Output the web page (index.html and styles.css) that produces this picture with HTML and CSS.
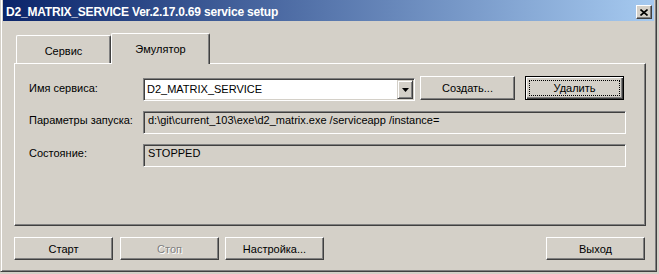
FILE: index.html
```html
<!DOCTYPE html>
<html>
<head>
    <title>D2_MATRIX_SERVICE setup</title>
    <link rel="stylesheet" href="styles.css">
</head>
<body>
    <div class="window">
        <div class="titlebar">
            <span class="title">D2_MATRIX_SERVICE Ver.2.17.0.69 service setup</span>
            <button class="close">
                <svg width="8" height="7" viewBox="0 0 8 7">
                    <path d="M0.5 0.5 L7.5 6.5 M7.5 0.5 L0.5 6.5" stroke="#000" stroke-width="1.6" fill="none"/>
                </svg>
            </button>
        </div>
        <div class="content">
            <div class="tabs">
                <div class="tab">Сервис</div>
                <div class="tab active">Эмулятор</div>
            </div>
            <div class="panel">
                <div class="row row-first">
                    <label class="label">Имя сервиса:</label>
                    <div class="combo">
                        <span class="combo-text">D2_MATRIX_SERVICE</span>
                        <span class="combo-btn">
                            <svg width="7" height="4" viewBox="0 0 7 4"><polygon points="0,0 7,0 3.5,4" fill="#000"/></svg>
                        </span>
                    </div>
                    <button class="btn create">Создать...</button>
                    <button class="btn default"><span class="focus">Удалить</span></button>
                </div>
                <div class="row">
                    <label class="label">Параметры запуска:</label>
                    <div class="field">d:\git\current_103\exe\d2_matrix.exe /serviceapp /instance=</div>
                </div>
                <div class="row row-last">
                    <label class="label">Состояние:</label>
                    <div class="field">STOPPED</div>
                </div>
            </div>
            <div class="actions">
                <button class="btn">Старт</button>
                <button class="btn stop" disabled>Стоп</button>
                <button class="btn setup">Настройка...</button>
                <button class="btn exit">Выход</button>
            </div>
        </div>
    </div>
</body>
</html>
```

FILE: styles.css
```css
body {
    margin: 0;
    background-color: #d4d0c8;
    font-family: "Liberation Sans", Arial, sans-serif;
    font-size: 11px;
    color: #000;
}

.window {
    width: 657px;
    height: 272px;
    box-sizing: border-box;
    padding: 0 2px;
    border-left: 1px solid #d4d0c8;
    border-right: 1px solid #404040;
    border-bottom: 1px solid #404040;
    box-shadow: inset 1px 0 #fff, inset -1px -1px #808080;
}

.titlebar {
    height: 21px;
    box-sizing: border-box;
    padding: 3px 2px 0 3px;
    display: flex;
    align-items: center;
    justify-content: space-between;
    background: linear-gradient(to right, #0a246a, #a6caf0);
    color: #fff;
}

.title {
    font-weight: bold;
    font-size: 12px;
    letter-spacing: -0.2px;
    white-space: nowrap;
}

.close {
    width: 16px;
    height: 14px;
    padding: 0;
    display: flex;
    align-items: center;
    justify-content: center;
    background-color: #d4d0c8;
    border: 1px solid;
    border-color: #fff #404040 #404040 #fff;
    box-shadow: inset -1px -1px #808080;
}

.content {
    padding-left: 11px;
}

/* tabs */
.tabs {
    margin-top: 12px;
    height: 30px;
    padding-left: 2px;
    display: flex;
    align-items: flex-end;
}

.tab {
    width: 95px;
    height: 28px;
    box-sizing: border-box;
    padding-top: 9px;
    line-height: 13px;
    text-align: center;
    border-top: 1px solid #fff;
    border-left: 1px solid #fff;
    border-right: 1px solid #404040;
    border-top-left-radius: 2px;
    border-top-right-radius: 2px;
    box-shadow: inset -1px 0 #808080;
}

.tab.active {
    width: 99px;
    height: 31px;
    margin-bottom: -1px;
    position: relative;
    z-index: 1;
    background-color: #d4d0c8;
}

.panel {
    width: 632px;
    height: 163px;
    box-sizing: border-box;
    padding: 12px 0 0 14px;
    border: 1px solid;
    border-color: #fff #404040 #404040 #fff;
    box-shadow: inset -1px -1px #808080;
}

.row {
    display: flex;
    align-items: flex-start;
    margin-bottom: 10px;
}

.row-first {
    margin-bottom: 10px;
}

.label {
    width: 114px;
    flex-shrink: 0;
    padding-top: 3px;
    line-height: 13px;
}

.row-first .label {
    padding-top: 6px;
}

/* sunken controls */
.field,
.combo {
    height: 23px;
    box-sizing: border-box;
    border: 1px solid;
    border-color: #808080 #fff #fff #808080;
    box-shadow: inset 1px 1px #404040, inset -1px -1px #d4d0c8;
}

.field {
    width: 483px;
    padding: 2px 4px 0;
    line-height: 13px;
    white-space: nowrap;
}

.combo {
    width: 272px;
    margin-top: 2px;
    padding: 1px 1px 1px 3px;
    display: flex;
    align-items: center;
    background-color: #fff;
}

.combo-text {
    flex: 1;
    line-height: 13px;
}

.combo-btn {
    width: 16px;
    height: 19px;
    box-sizing: border-box;
    display: flex;
    align-items: center;
    justify-content: center;
    background-color: #d4d0c8;
    border: 1px solid;
    border-color: #d4d0c8 #404040 #404040 #d4d0c8;
    box-shadow: inset 1px 1px #fff, inset -1px -1px #808080;
}

/* buttons */
.btn {
    width: 99px;
    height: 23px;
    padding: 0;
    font-family: inherit;
    font-size: 11px;
    color: #000;
    background-color: #d4d0c8;
    border: 1px solid;
    border-color: #fff #404040 #404040 #fff;
    box-shadow: inset -1px -1px #808080;
}

.row .btn {
    height: 24px;
}

.create {
    width: 95px;
    margin-left: 5px;
}

.default {
    margin-left: 10px;
    padding: 3px;
    display: flex;
    border-color: #000;
    box-shadow: inset 1px 1px #fff, inset -1px -1px #404040, inset -2px -2px #808080;
}

.focus {
    flex: 1;
    display: flex;
    align-items: center;
    justify-content: center;
    border: 1px dotted #000;
}

.actions {
    width: 631px;
    margin-top: 11px;
    display: flex;
}

.stop {
    margin-left: 7px;
    color: #808080;
    text-shadow: 1px 1px #fff;
}

.setup {
    margin-left: 6px;
}

.exit {
    margin-left: auto;
}
```
